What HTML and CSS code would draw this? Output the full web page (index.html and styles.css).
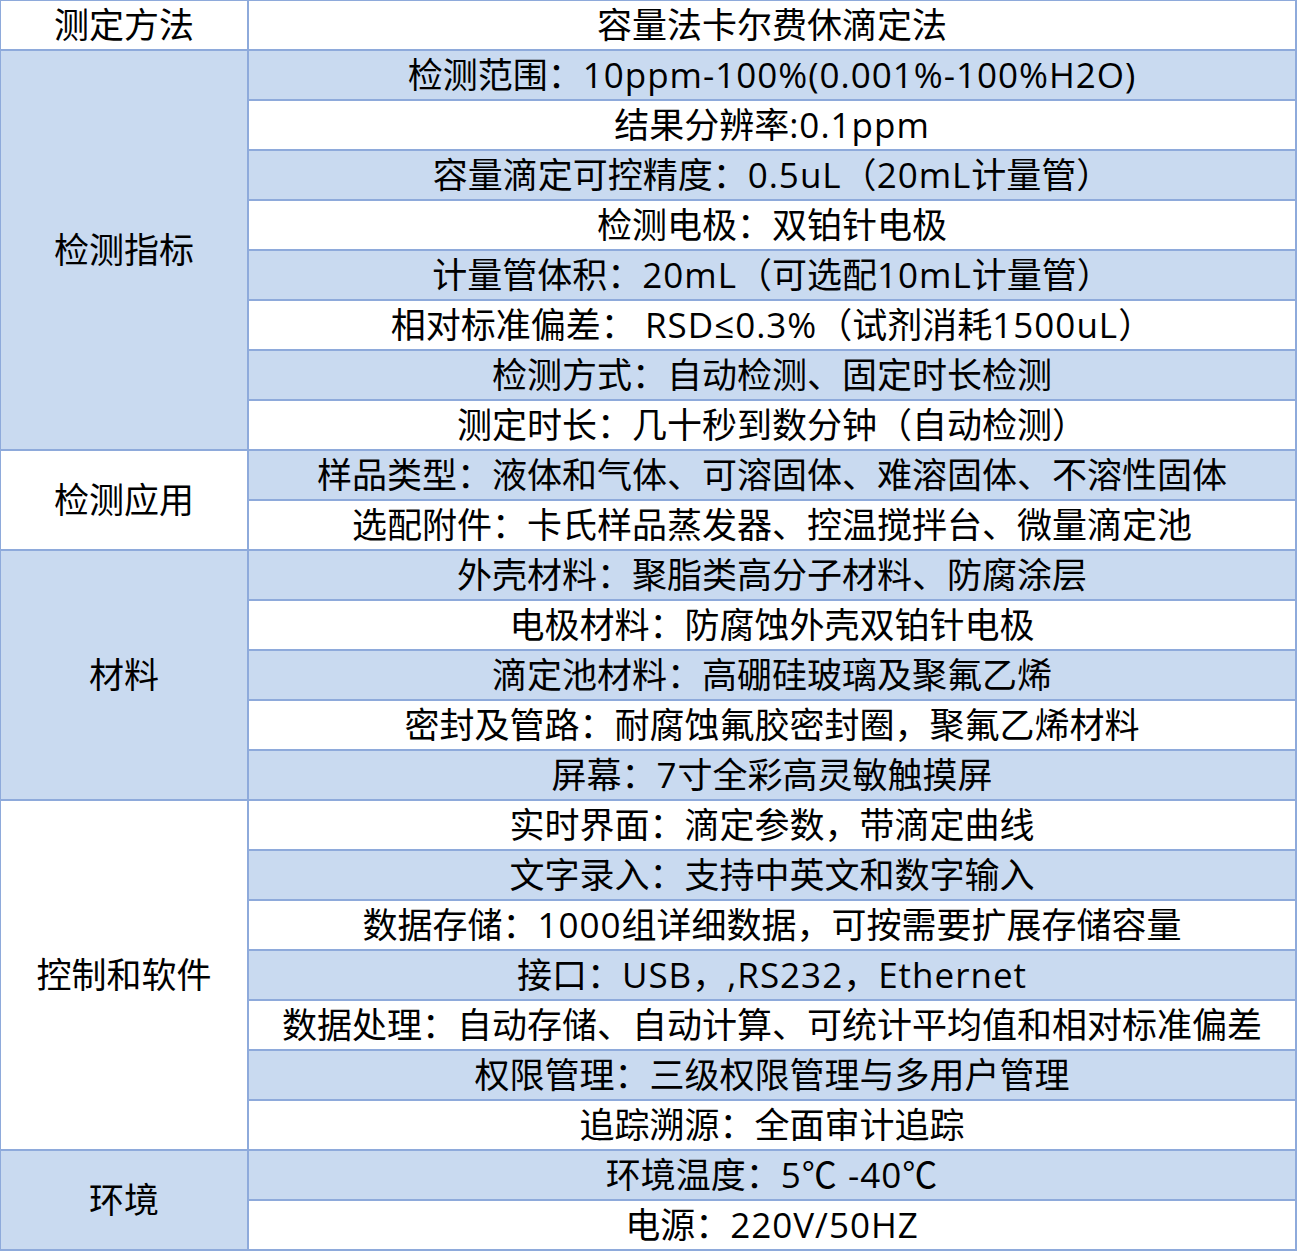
FILE: index.html
```html
<!DOCTYPE html>
<html lang="zh-CN">
<head>
<meta charset="utf-8">
<title>参数表</title>
<link rel="stylesheet" href="styles.css">
</head>
<body>
<table class="spec">
  <colgroup><col class="c1"><col class="c2"></colgroup>
  <tbody>
    <tr><td class="w">测定方法</td><td class="w">容量法卡尔费休滴定法</td></tr>
    <tr><td class="b" rowspan="8">检测指标</td><td class="b">检测范围：<span class="en">10ppm-100%(0.001%-100%H2O)</span></td></tr>
    <tr><td class="w">结果分辨率<span class="en">:0.1ppm</span></td></tr>
    <tr><td class="b">容量滴定可控精度：<span class="en">0.5uL</span>（<span class="en">20mL</span>计量管）</td></tr>
    <tr><td class="w">检测电极：双铂针电极</td></tr>
    <tr><td class="b">计量管体积：<span class="en">20mL</span>（可选配<span class="en">10mL</span>计量管）</td></tr>
    <tr><td class="w">相对标准偏差： <span class="en">RSD≤0.3%</span>（试剂消耗<span class="en">1500uL</span>）</td></tr>
    <tr><td class="b">检测方式：自动检测、固定时长检测</td></tr>
    <tr><td class="w">测定时长：几十秒到数分钟（自动检测）</td></tr>
    <tr><td class="w" rowspan="2">检测应用</td><td class="b">样品类型：液体和气体、可溶固体、难溶固体、不溶性固体</td></tr>
    <tr><td class="w">选配附件：卡氏样品蒸发器、控温搅拌台、微量滴定池</td></tr>
    <tr><td class="b" rowspan="5">材料</td><td class="b">外壳材料：聚脂类高分子材料、防腐涂层</td></tr>
    <tr><td class="w">电极材料：防腐蚀外壳双铂针电极</td></tr>
    <tr><td class="b">滴定池材料：高硼硅玻璃及聚氟乙烯</td></tr>
    <tr><td class="w">密封及管路：耐腐蚀氟胶密封圈，聚氟乙烯材料</td></tr>
    <tr><td class="b">屏幕：<span class="en">7</span>寸全彩高灵敏触摸屏</td></tr>
    <tr><td class="w" rowspan="7">控制和软件</td><td class="w">实时界面：滴定参数，带滴定曲线</td></tr>
    <tr><td class="b">文字录入：支持中英文和数字输入</td></tr>
    <tr><td class="w">数据存储：<span class="en">1000</span>组详细数据，可按需要扩展存储容量</td></tr>
    <tr><td class="b">接口：<span class="en">USB</span>，<span class="en">,RS232</span>，<span class="en">Ethernet</span></td></tr>
    <tr><td class="w">数据处理：自动存储、自动计算、可统计平均值和相对标准偏差</td></tr>
    <tr><td class="b">权限管理：三级权限管理与多用户管理</td></tr>
    <tr><td class="w">追踪溯源：全面审计追踪</td></tr>
    <tr><td class="b" rowspan="2">环境</td><td class="b">环境温度：<span class="en">5℃ -40℃</span></td></tr>
    <tr><td class="w">电源：<span class="en">220V/50HZ</span></td></tr>
  </tbody>
</table>
</body>
</html>
```
FILE: styles.css
```css
html, body {
  margin: 0;
  padding: 0;
  background: #ffffff;
}

.spec {
  border-collapse: separate;
  border-spacing: 0;
  table-layout: fixed;
  width: 1297px;
  border-top: 1px solid #8eaadb;
  border-left: 1px solid #8eaadb;
  font-family: "Open Sans", "Noto Sans CJK SC", sans-serif;
  font-size: 35px;
  color: #000000;
}

.c1 { width: 248px; }
.c2 { width: 1048px; }

.spec td {
  box-sizing: border-box;
  height: 50px;
  padding: 0;
  border-right: 2px solid #8eaadb;
  border-bottom: 2px solid #8eaadb;
  text-align: center;
  vertical-align: middle;
  line-height: 48px;
  white-space: nowrap;
  overflow: hidden;
}

.spec td.w { background: #ffffff; }
.spec td.b { background: #c9daf0; }

.en { letter-spacing: 1px; }
```
